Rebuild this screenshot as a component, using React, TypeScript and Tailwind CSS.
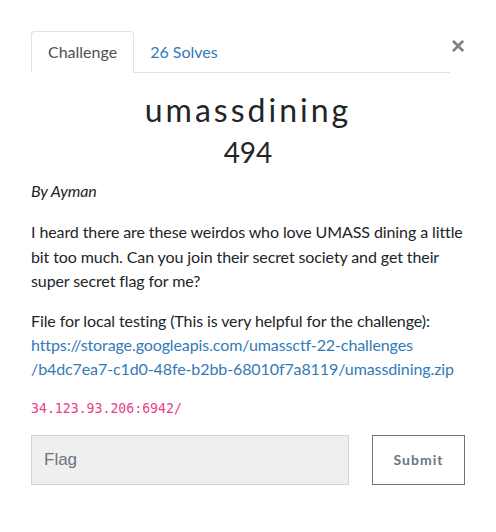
export default function App() {
  return (
    <div className="min-h-[532px] w-[496px] bg-white font-['Lato','Noto_Sans',sans-serif] text-[#212529]">
      <div className="mx-[31px] pt-[31px]">
        {/* TABS */}
        <div className="flex items-start">
          <div className="flex flex-1 border-b border-[#dee2e6]">
            <div className="-mb-px h-[42px] border border-[#dee2e6] border-b-white rounded-t-[4px] bg-white px-4 pt-[8px] text-[16px] leading-6 text-[#495057]">
              Challenge
            </div>
            <div className="h-[41px] px-4 pt-[9px] text-[16px] leading-6 text-[#337ab7]">
              26 Solves
            </div>
          </div>
          <button className="-mr-[1px] mt-[3px] w-[16px] text-[24px] font-bold leading-6 text-[#808080] font-['Liberation_Sans',sans-serif]">
            ×
          </button>
        </div>

        {/* TITLE */}
        <h2 className="mt-[18px] text-center text-[32px] leading-[38px] tracking-[3px] font-normal">
          umassdining
        </h2>
        <h3 className="mt-[6px] text-center text-[28px] leading-[34px] font-normal">
          494
        </h3>

        {/* DESCRIPTION */}
        <div className="-mr-[4px] tracking-[-0.1px]">
          <p className="mt-[10px] mb-[17px] text-[16px] leading-6 italic">By Ayman</p>
          <p className="mb-[15px] text-[16px] leading-[24.5px]">
            I heard there are these weirdos who love UMASS dining a little bit
            too much. Can you join their secret society and get their super
            secret flag for me?
          </p>
          <p className="text-[16px] leading-6">
            File for local testing (This is very helpful for the challenge):
            <br />
            <a className="text-[#337ab7]">
              https://storage.googleapis.com/umassctf-22-challenges
              <br />
              /b4dc7ea7-c1d0-48fe-b2bb-68010f7a8119/umassdining.zip
            </a>
          </p>
        </div>
        <div className="mt-[18px] text-[13.2px] leading-5 text-[#e83e8c] font-['DejaVu_Sans_Mono',monospace]">
          34.123.93.206:6942/
        </div>

        {/* FORM */}
        <div className="mt-[16px] flex gap-[23px]">
          <input
            placeholder="Flag"
            className="h-[50px] flex-1 border border-[#ced4da] bg-[#efefef] px-[12px] text-[17px] text-[#495057] placeholder:text-[#6c757d] font-['Liberation_Sans',sans-serif] outline-none"
          />
          <button className="h-[50px] w-[93px] border border-[#6c757d] bg-white text-[14px] font-bold tracking-[1px] text-[#6c757d]">
            Submit
          </button>
        </div>
      </div>
    </div>
  );
}
